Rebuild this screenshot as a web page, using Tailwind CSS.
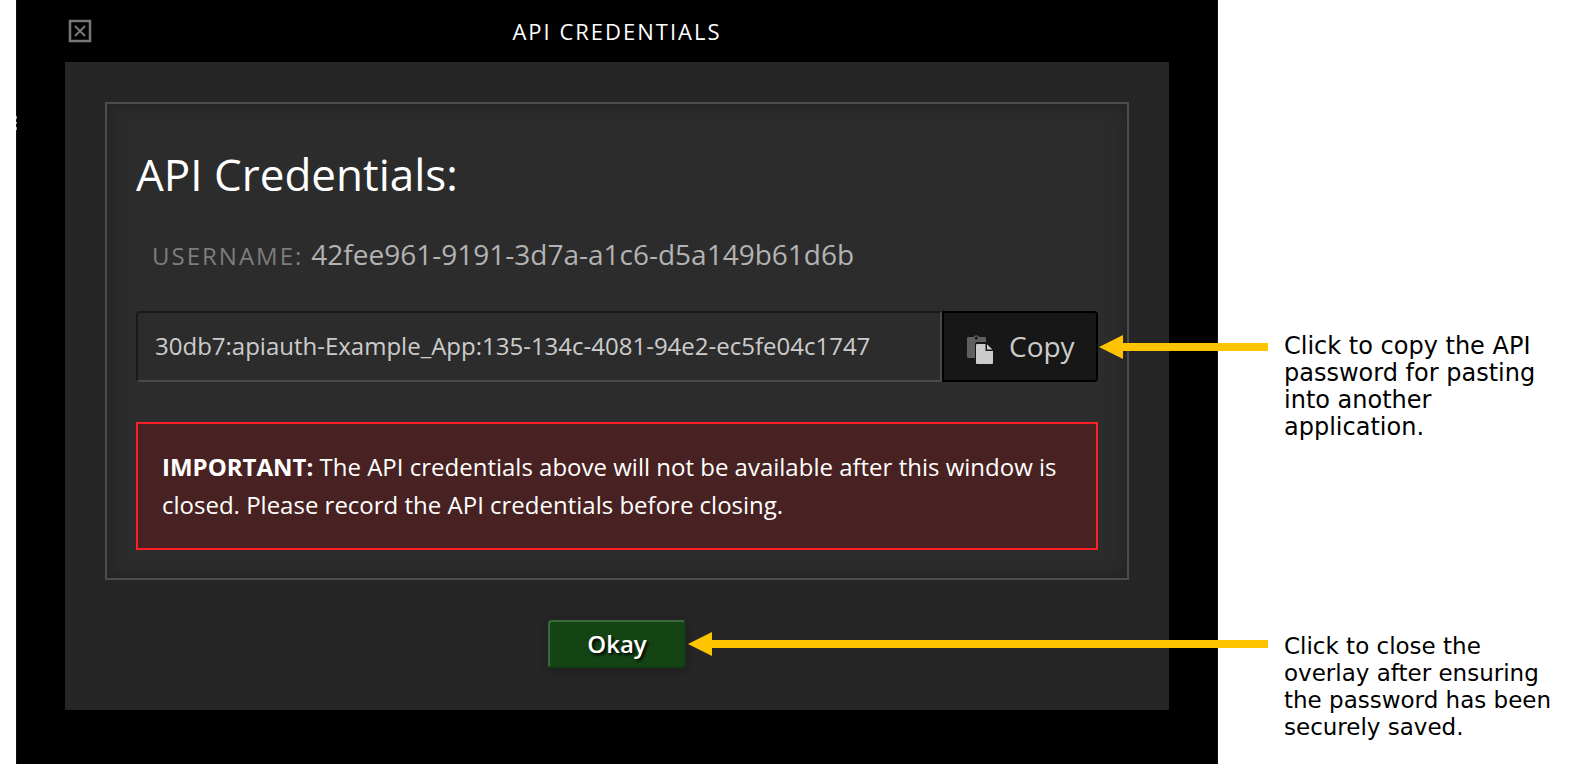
<!DOCTYPE html>
<html lang="en">
<head>
    <meta charset="UTF-8">
    <meta name="viewport" content="width=device-width, initial-scale=1.0">
    <title>API Credentials</title>
    <script src="https://cdn.jsdelivr.net/npm/@tailwindcss/browser@4"></script>
</head>
<body class="bg-white font-['Open_Sans',sans-serif]">
    <div class="flex min-h-screen overflow-hidden pl-4">
        <!-- Overlay -->
        <main class="relative flex-1 border-x border-[#111] bg-black px-12 pb-[54px]">
            <!-- Sliver of the page behind the overlay -->
            <div class="absolute top-[116px] -left-px flex flex-col gap-[3px]" aria-hidden="true">
                <span class="h-[3px] w-px bg-[#aaa]"></span>
                <span class="h-[2px] w-px bg-[#aaa]"></span>
                <span class="h-[3px] w-px bg-[#aaa]"></span>
            </div>

            <header class="grid h-[62px] grid-cols-[1fr_auto_1fr] items-center">
                <button type="button" aria-label="Close" class="ml-[3px] w-6">
                    <svg class="block size-6" viewBox="0 0 24 24" fill="none" stroke="#777777" stroke-width="2">
                        <rect x="2" y="2" width="20" height="20" stroke-width="2.500"/>
                        <path d="M7 7l10 10M17 7L7 17"/>
                    </svg>
                </button>
                <h1 class="text-[22px] leading-8 tracking-[2px] text-white uppercase">API Credentials</h1>
            </header>

            <div class="bg-[#262626] p-10 pb-[42px]">
                <section class="border-2 border-[#4c4c4c] bg-[#2c2c2c] px-[29px] pt-[42px] pb-7 shadow-[inset_0_0_20px_rgba(0,0,0,0.25)]">
                    <h2 class="text-[44px] leading-[56px] text-white">API Credentials:</h2>

                    <p class="mt-8 flex items-baseline gap-2 pl-4 leading-10">
                        <span class="text-[24px] tracking-[2px] text-[#7d7d7d] uppercase">Username:</span>
                        <span class="text-[28px] text-[#b3b3b3]">42fee961-9191-3d7a-a1c6-d5a149b61d6b</span>
                    </p>

                    <div class="mt-[35px] flex h-[71px]">
                        <input type="text" readonly aria-label="API password" value="30db7:apiauth-Example_App:135-134c-4081-94e2-ec5fe04c1747"
                            class="min-w-0 flex-1 rounded-l-[4px] border-2 border-t-[#1a1a1a] border-r-[#4a4a4a] border-b-[#4a4a4a] border-l-[#1a1a1a] bg-[#2c2c2c] px-[17px] pb-[2px] text-[24px] text-[#cccccc] outline-none">
                        <div class="relative flex">
                            <button type="button" class="flex w-[156px] items-center rounded-r-[4px] border-2 border-black bg-[#171717] pb-[2px] pl-[23px] text-[28px] text-[#cccccc]">
                                <svg class="mt-2 mr-[15px] h-[29px] w-[27px]" viewBox="0 0 27 29">
                                    <path fill="#606060" fill-rule="evenodd" d="M1 2h5.500a3 3 0 0 1 5.500 0H18a1 1 0 0 1 1 1v4h-9.500L8 8.500V23H1a1 1 0 0 1-1-1V3a1 1 0 0 1 1-1zM9.300 1.600a1.500 1.500 0 1 0 0 3 1.500 1.500 0 0 0 0-3z"/>
                                    <path fill="#cccccc" d="M10 9h8.500v7H26v12a1 1 0 0 1-1 1H10a1 1 0 0 1-1-1V10a1 1 0 0 1 1-1zm10 .2L25.500 14.500H20z"/>
                                </svg>
                                Copy
                            </button>
                            <svg class="absolute top-1/2 left-full h-6 w-[170px] -translate-y-1/2" viewBox="0 0 170 24" fill="#ffc400" aria-hidden="true">
                                <path d="M1 12L25 0v8h145v8H25v8z"/>
                            </svg>
                        </div>
                    </div>

                    <div class="mt-10 border-2 border-[#ff1f29] bg-[#482222] px-6 py-[24px] text-[24px] leading-[38px] text-white">
                        <strong>IMPORTANT:</strong> The API credentials above will not be available after this window is closed. Please record the API credentials before closing.
                    </div>
                </section>

                <div class="mt-10 grid grid-cols-[1fr_auto_1fr] items-center">
                    <button type="button" class="col-start-2 h-12 w-[138px] rounded-[4px] border-2 border-t-[#3a6a3a] border-r-[#123d12] border-b-[#123d12] border-l-[#3a6a3a] bg-[#144414] text-[24px] leading-none font-semibold text-white shadow-[0_2px_10px_rgba(0,0,0,0.3)] text-shadow-[2px_2px_3px_rgb(0_0_0)]">Okay</button>
                    <div class="-mr-[139px] ml-[2px] flex h-6 items-center" aria-hidden="true">
                        <svg class="size-6 shrink-0" viewBox="0 0 24 24" fill="#ffc400"><path d="M0 12L24 0v24z"/></svg>
                        <span class="h-2 flex-1 bg-[#ffc400]"></span>
                    </div>
                </div>
            </div>
        </main>

        <!-- Callouts -->
        <aside class="w-[362px] shrink-0 pt-[333px] pl-[66px] font-['DejaVu_Sans',sans-serif] leading-[27px] text-black">
            <p class="w-[280px] text-[24px]">Click to copy the API password for pasting into another application.</p>
            <p class="mt-48 w-[280px] text-[23px]">Click to close the overlay after ensuring the password has been securely saved.</p>
        </aside>
    </div>
</body>
</html>
